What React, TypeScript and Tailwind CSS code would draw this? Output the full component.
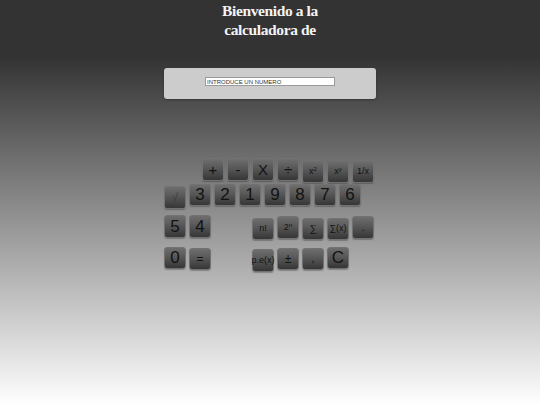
import React from "react";

type Btn = {
  label: React.ReactNode;
  size: string;
  mt: string;
  faint?: boolean;
};

function Key({ label, size, mt, faint }: Btn) {
  return (
    <button
      className={`${mt} ${size} flex h-[22.5px] w-[22px] shrink-0 items-center justify-center overflow-visible whitespace-nowrap rounded-[3px] border border-[#727272] bg-[linear-gradient(to_bottom,#6e6e6e_0%,#575757_45%,#363636_100%)] p-0 leading-none shadow-[0_1px_1px_rgba(0,0,0,0.25)] ${faint ? "text-[#3a3a3a]" : "text-[#121212]"}`}
      style={{ fontFamily: '"Liberation Sans", Arial, sans-serif' }}
    >
      {label}
    </button>
  );
}

const big = "text-[17px]";
const op = "text-[15px]";
const small = "text-[9px]";

export default function App() {
  return (
    <div
      className="min-h-[405px] w-full bg-[linear-gradient(to_bottom,#333333_14%,#ffffff_100%)]"
      style={{ fontFamily: '"Liberation Sans", Arial, sans-serif' }}
    >
      <h1
        className="pt-[1px] text-center text-[15.5px] font-bold leading-[19px] tracking-[-0.025em] text-[#f4f4f4]"
        style={{ fontFamily: '"Liberation Serif", "Times New Roman", serif' }}
      >
        <div>Bienvenido a la</div>
        <div>calculadora de</div>
      </h1>

      <div className="mx-auto mt-[29px] flex h-[31px] w-[212px] justify-center rounded-[3px] bg-[#cccccc] pt-[9px] shadow-[0_1px_2px_rgba(0,0,0,0.3)]">
        <input
          readOnly
          value="INTRODUCE UN NUMERO"
          className="h-[9px] w-[130px] border border-[#9a9a9a] bg-white px-[1px] text-[6px] leading-[7px] text-[#333] outline-none"
          style={{ fontFamily: '"Liberation Sans", Arial, sans-serif' }}
        />
      </div>

      <div className="mx-auto mt-[59px] w-[212px]">
        {/* row 1 */}
        <div className="ml-[38px] flex h-[25.5px] items-start gap-[3px]">
          <Key label="+" size={op} mt="mt-0" />
          <Key label="-" size={op} mt="mt-0" />
          <Key label="X" size={op} mt="mt-0" />
          <Key label="÷" size={op} mt="mt-0" />
          <Key
            label={
              <span>
                x<sup className="text-[6px]">2</sup>
              </span>
            }
            size={small}
            mt="mt-[2px]"
          />
          <Key
            label={
              <span>
                x<sup className="text-[6px]">y</sup>
              </span>
            }
            size={small}
            mt="mt-[2px]"
          />
          <Key label="1/x" size={small} mt="mt-[2px]" />
        </div>

        {/* row 2 */}
        <div className="flex h-[31.5px] items-start gap-[3px]">
          <Key label="√" size="text-[11px]" mt="mt-[2.5px]" faint />
          <Key label="3" size={big} mt="mt-0" />
          <Key label="2" size={big} mt="mt-0" />
          <Key label="1" size={big} mt="mt-0" />
          <Key label="9" size={big} mt="mt-0" />
          <Key label="8" size={big} mt="mt-0" />
          <Key label="7" size={big} mt="mt-0" />
          <Key label="6" size={big} mt="mt-0" />
        </div>

        {/* row 3 */}
        <div className="flex h-[31.5px] items-start">
          <div className="flex gap-[3px]">
            <Key label="5" size={big} mt="mt-0" />
            <Key label="4" size={big} mt="mt-0" />
          </div>
          <div className="ml-[41px] flex items-start gap-[3px]">
            <Key label="n!" size={small} mt="mt-[2.5px]" />
            <Key
              label={
                <span>
                  2<sup className="text-[6px]">n</sup>
                </span>
              }
              size={small}
              mt="mt-[1px]"
            />
            <Key label="∑" size="text-[10px]" mt="mt-[2.5px]" />
            <Key label="∑(x)" size={small} mt="mt-[2.5px]" />
            <Key label="." size="text-[11px]" mt="mt-[1px]" />
          </div>
        </div>

        {/* row 4 */}
        <div className="flex items-start">
          <div className="flex items-start gap-[3px]">
            <Key label="0" size={big} mt="mt-0" />
            <Key label="=" size="text-[12px]" mt="mt-[1px]" />
          </div>
          <div className="ml-[41px] flex items-start gap-[3px]">
            <Key label="p.e(x)" size={small} mt="mt-[2.5px]" />
            <Key label="±" size="text-[12px]" mt="mt-[1px]" />
            <Key label="," size="text-[11px]" mt="mt-[1px]" />
            <Key label="C" size={big} mt="mt-0" />
          </div>
        </div>
      </div>
    </div>
  );
}
